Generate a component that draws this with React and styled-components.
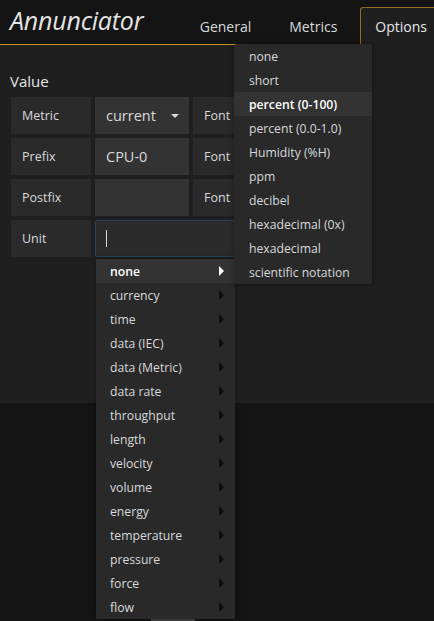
import React from 'react';
import styled, { createGlobalStyle } from 'styled-components';

const GlobalStyle = createGlobalStyle`
  html, body {
    margin: 0;
    padding: 0;
    background: #141414;
    font-family: "Open Sans", "Noto Sans", sans-serif;
    color: #d8d9da;
  }
  * { box-sizing: border-box; }
`;

const Page = styled.div`
  position: relative;
  width: 434px;
  height: 621px;
  overflow: hidden;
  background: #141414;
`;

const Header = styled.header`
  display: flex;
  align-items: flex-end;
  width: 444px;
  height: 45px;
  background: #141414;
  border-bottom: 1px solid #c8961e;
  padding-left: 10px;
`;

const Title = styled.h1`
  margin: 0 auto 0 0;
  align-self: center;
  padding-bottom: 4px;
  font-size: 25px;
  font-weight: 400;
  font-style: italic;
  color: #e4e4e4;
  letter-spacing: -0.2px;
`;

const Tab = styled.div`
  height: 38px;
  margin-bottom: -1px;
  padding: ${(p) => (p.active ? '0 16px 0 14px' : '0 18px')};
  margin-left: ${(p) => (p.active ? '4px' : '0')};
  display: flex;
  align-items: center;
  font-size: 14px;
  color: ${(p) => (p.active ? '#e6e6e6' : '#d8d9da')};
  background: ${(p) => (p.active ? '#1f1f20' : 'transparent')};
  border: 1px solid ${(p) => (p.active ? '#9c6a28' : 'transparent')};
  border-bottom-color: ${(p) => (p.active ? '#1f1f20' : 'transparent')};
  border-radius: 3px 3px 0 0;
`;

const Body = styled.main`
  height: 358px;
  background: #1f1f20;
  padding: 26px 0 0 10px;
`;

const SectionTitle = styled.h2`
  margin: 0 0 6px;
  font-size: 15px;
  font-weight: 400;
  color: #e4e4e4;
`;

const Form = styled.div`
  display: grid;
  grid-template-columns: 80px 94px 80px;
  grid-auto-rows: 37px;
  column-gap: 4px;
  row-gap: 4px;
  padding-left: 1px;
`;

const Label = styled.div`
  display: flex;
  align-items: center;
  padding-left: 11px;
  font-size: 12.5px;
  background: #2a2a2b;
  color: #d8d9da;
`;

const Field = styled.div`
  display: flex;
  align-items: center;
  justify-content: space-between;
  padding: 0 10px 0 11px;
  font-size: 14.5px;
  background: #333334;
  color: #d8d9da;
`;

const Caret = styled.span`
  width: 0;
  height: 0;
  border-left: 4px solid transparent;
  border-right: 4px solid transparent;
  border-top: 4px solid #d8d9da;
`;

const UnitInput = styled.div`
  grid-column: 2 / span 2;
  display: flex;
  align-items: center;
  padding-left: 10px;
  background: #2b2b2c;
  border: 1px solid #27455e;
  border-radius: 2px;
`;

const Cursor = styled.span`
  width: 1px;
  height: 17px;
  background: #d8d9da;
`;

const Menu = styled.ul`
  position: absolute;
  left: ${(p) => p.left}px;
  top: ${(p) => p.top}px;
  width: ${(p) => p.width}px;
  margin: 0;
  padding: 0;
  list-style: none;
  background: #29292a;
  border-radius: ${(p) => (p.sub ? '3px' : '0')};
  box-shadow: 0 0 6px rgba(0, 0, 0, 0.35);
`;

const Item = styled.li`
  position: relative;
  height: 24px;
  display: flex;
  align-items: center;
  padding-left: ${(p) => p.indent}px;
  font-size: 12.2px;
  font-weight: ${(p) => (p.active ? 600 : 400)};
  color: ${(p) => (p.active ? '#ffffff' : '#d8d9da')};
  background: ${(p) => (p.active ? '#333334' : 'transparent')};
`;

const Arrow = styled.span`
  position: absolute;
  right: 11px;
  top: 7px;
  width: 0;
  height: 0;
  border-top: 5px solid transparent;
  border-bottom: 5px solid transparent;
  border-left: 5px solid ${(p) => (p.active ? '#ffffff' : '#0d0d0d')};
`;

const ScrollThumb = styled.div`
  position: absolute;
  left: 151px;
  bottom: 0;
  width: 44px;
  height: 2px;
  background: #3a3a3a;
`;

const units = [
  'none', 'currency', 'time', 'data (IEC)', 'data (Metric)', 'data rate',
  'throughput', 'length', 'velocity', 'volume', 'energy', 'temperature',
  'pressure', 'force', 'flow',
];

const noneUnits = [
  'none', 'short', 'percent (0-100)', 'percent (0.0-1.0)', 'Humidity (%H)',
  'ppm', 'decibel', 'hexadecimal (0x)', 'hexadecimal', 'scientific notation',
];

export default function App() {
  return (
    <Page>
      <GlobalStyle />
      <Header>
        <Title>Annunciator</Title>
        <Tab>General</Tab>
        <Tab>Metrics</Tab>
        <Tab active>Options</Tab>
      </Header>
      <Body>
        <SectionTitle>Value</SectionTitle>
        <Form>
          <Label>Metric</Label>
          <Field>current<Caret /></Field>
          <Label>Font</Label>
          <Label>Prefix</Label>
          <Field>CPU-0</Field>
          <Label>Font</Label>
          <Label>Postfix</Label>
          <Field />
          <Label>Font</Label>
          <Label>Unit</Label>
          <UnitInput><Cursor /></UnitInput>
        </Form>
      </Body>

      <Menu left={96} top={259} width={139}>
        {units.map((u, i) => (
          <Item key={u} indent={14} active={i === 0}>
            {u}
            <Arrow active={i === 0} />
          </Item>
        ))}
      </Menu>

      <Menu sub left={234} top={44} width={138}>
        {noneUnits.map((u, i) => (
          <Item key={u} indent={15} active={i === 2}>{u}</Item>
        ))}
      </Menu>

      <ScrollThumb />
    </Page>
  );
}
